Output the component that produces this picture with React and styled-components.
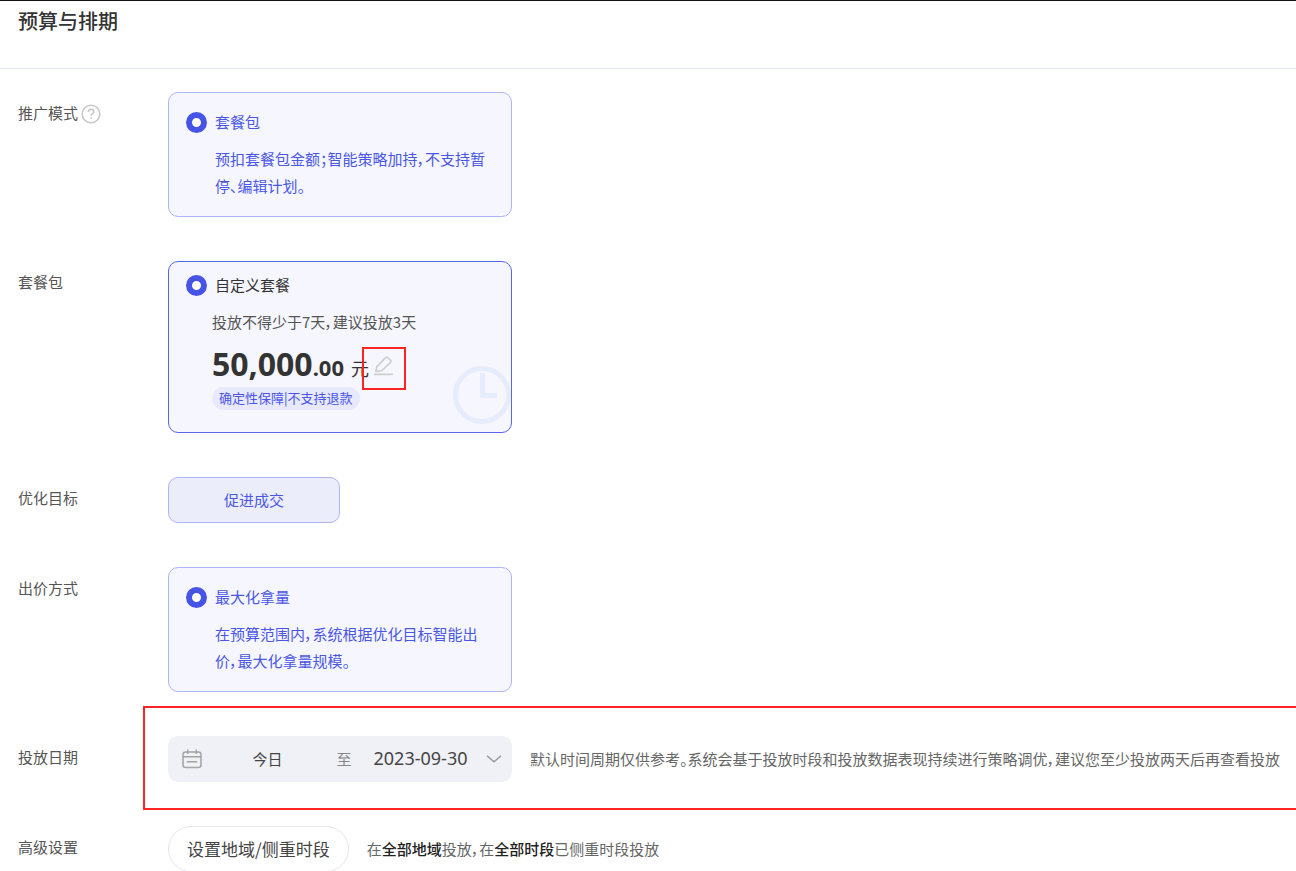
import React from 'react'
import styled, { createGlobalStyle } from 'styled-components'

const App = () => {
  return (
    <>
      <GlobalStyle />
      <Page>
        <Header>
          <h1>预算与排期</h1>
        </Header>
        <Form onSubmit={(e) => e.preventDefault()}>
          <Row>
            <Label>
              推广模式
              <HelpIcon />
            </Label>
            <OptionCard
              name='mode'
              title='套餐包'
              text='预扣套餐包金额；智能策略加持，不支持暂停、编辑计划。'
            />
          </Row>

          <Row>
            <Label>套餐包</Label>
            <Card $active>
              <CardHead $dark>
                <Radio type='radio' name='package' defaultChecked />
                <span>自定义套餐</span>
              </CardHead>
              <PackageBody>
                <p>投放不得少于7天，建议投放3天</p>
                <Price>
                  <strong>50,000</strong>
                  <b>.00</b>
                  <span>元</span>
                  <EditButton type='button' aria-label='编辑金额'>
                    <EditIcon />
                    <Marker $inset='-9px -12px -14px' />
                  </EditButton>
                </Price>
                <Tag>确定性保障|不支持退款</Tag>
              </PackageBody>
              <ClockIcon />
            </Card>
          </Row>

          <Row>
            <Label>优化目标</Label>
            <GoalButton type='button'>促进成交</GoalButton>
          </Row>

          <Row>
            <Label>出价方式</Label>
            <OptionCard
              name='bid'
              title='最大化拿量'
              text='在预算范围内，系统根据优化目标智能出价，最大化拿量规模。'
            />
          </Row>

          <Row>
            <Label>投放日期</Label>
            <Inline>
              <DateRange>
                <CalendarIcon />
                <input type='text' aria-label='开始日期' defaultValue='今日' />
                <span>至</span>
                <input
                  type='text'
                  aria-label='结束日期'
                  defaultValue='2023-09-30'
                />
                <ChevronIcon />
              </DateRange>
              <Hint>
                默认时间周期仅供参考。系统会基于投放时段和投放数据表现持续进行策略调优，建议您至少投放两天后再查看投放
              </Hint>
              <Marker $inset='-30px -4px -28px -25px' />
            </Inline>
          </Row>

          <Row>
            <Label>高级设置</Label>
            <Inline>
              <PillButton type='button'>设置地域/侧重时段</PillButton>
              <Hint>
                在<b>全部地域</b>投放，在<b>全部时段</b>已侧重时段投放
              </Hint>
            </Inline>
          </Row>
        </Form>
      </Page>
    </>
  )
}

const OptionCard = ({ name, title, text }) => (
  <Card>
    <CardHead>
      <Radio type='radio' name={name} defaultChecked />
      <span>{title}</span>
    </CardHead>
    <CardText>{text}</CardText>
  </Card>
)

const HelpIcon = () => (
  <svg width='20' height='20' viewBox='0 0 20 20' fill='none' stroke='#c8c8c8'>
    <circle cx='10' cy='10' r='8.8' strokeWidth='1.6' />
    <path
      d='M7.3 8c0-1.7 1.2-2.7 2.7-2.7s2.7 1 2.7 2.4c0 1.9-2.6 2-2.6 4.1'
      strokeWidth='1.6'
    />
    <path d='M10.1 13.2v1.6' strokeWidth='1.6' />
  </svg>
)

const EditIcon = () => (
  <svg width='20' height='20' viewBox='0 0 20 20' fill='none' stroke='#cfcfcf'>
    <path
      d='M1.8 15.2l1-4.6L11.6 1.6q1-.9 2 0l3 2.8q.9.9 0 1.9l-8.6 8.2-4.4.9z'
      strokeWidth='1.7'
      strokeLinejoin='round'
    />
    <path d='M0 18.4h19' strokeWidth='1.8' />
  </svg>
)

const ClockIcon = () => (
  <Clock viewBox='0 0 58 58' fill='none' stroke='#e7ecfd' strokeWidth='5'>
    <circle cx='29' cy='29' r='26.5' />
    <path d='M29.5 7v22.5h14.5' />
  </Clock>
)

const CalendarIcon = () => (
  <svg width='20' height='20' viewBox='0 0 20 20' fill='none' stroke='#a3a3a3'>
    <rect x='1' y='3' width='18' height='15.5' rx='2.5' strokeWidth='1.5' />
    <path d='M5.8 .5v4.6M14.2 .5v4.6M1 7.8h18M4.8 12.8h10.4' strokeWidth='1.4' />
  </svg>
)

const ChevronIcon = () => (
  <svg width='16' height='16' viewBox='0 0 16 16' fill='none' stroke='#999'>
    <path d='M1 4.8l7 6 7-6' strokeWidth='1.5' />
  </svg>
)

const GlobalStyle = createGlobalStyle`
  * {
    box-sizing: border-box;
    margin: 0;
    padding: 0;
  }
  body {
    background: #fff;
    color: #555;
    font-family: 'Noto Sans CJK SC', sans-serif;
    font-size: 15px;
    font-feature-settings: 'palt';
    overflow-x: hidden;
  }
  button,
  input {
    font: inherit;
    font-feature-settings: inherit;
  }
`

const Page = styled.main`
  border-top: 1px solid #111;
  overflow: hidden;
`

const Header = styled.header`
  height: 68px;
  padding: 0 18px;
  border-bottom: 1px solid #e6eaf2;
  h1 {
    color: #333;
    font-size: 20px;
    font-weight: 500;
    line-height: 40px;
  }
`

const Form = styled.form`
  display: grid;
  gap: 44px;
  padding: 23px 0 0 18px;
`

const Row = styled.div`
  display: grid;
  grid-template-columns: 150px minmax(0, 1fr);
  align-items: start;
`

const Label = styled.div`
  display: flex;
  align-items: center;
  gap: 3px;
  height: 40px;
  svg {
    margin-top: 4px;
  }
`

const Card = styled.div`
  position: relative;
  width: 344px;
  padding: ${({ $active }) => ($active ? '10px 17px 22px' : '16px 17px 17px')};
  border: 1px solid ${({ $active }) => ($active ? '#5a66ea' : '#aeb4f8')};
  border-radius: 10px;
  background: #f6f6ff;
  overflow: hidden;
`

const CardHead = styled.label`
  display: flex;
  align-items: center;
  gap: 8px;
  height: 27px;
  color: ${({ $dark }) => ($dark ? '#333' : '#4a56e6')};
  span {
    padding-bottom: 2px;
  }
`

const Radio = styled.input`
  appearance: none;
  width: 21px;
  height: 21px;
  border: 6px solid #4654e6;
  border-radius: 50%;
  background: #fff;
`

const CardText = styled.p`
  margin-top: 9px;
  padding-left: 29px;
  color: #4a56e6;
  line-height: 27px;
`

const PackageBody = styled.div`
  margin-top: 9px;
  padding-left: 26px;
  line-height: 27px;
`

const Price = styled.div`
  display: flex;
  align-items: baseline;
  height: 52px;
  color: #333;
  font-family: 'Noto Sans', 'Noto Sans CJK SC', sans-serif;
  line-height: 58px;
  strong {
    font-size: 32px;
  }
  b {
    font-size: 22px;
  }
  > span {
    margin-left: 7px;
    font-size: 18px;
  }
`

const EditButton = styled.button`
  position: relative;
  display: block;
  width: 20px;
  height: 20px;
  margin-left: 5px;
  border: 0;
  background: none;
  svg {
    display: block;
  }
`

const Tag = styled.span`
  display: block;
  width: fit-content;
  padding: 0 7px 1px;
  border-radius: 12px;
  background: #e8e9fd;
  color: #4a56e6;
  font-size: 13px;
  line-height: 22px;
`

const Clock = styled.svg`
  position: absolute;
  right: 0;
  bottom: 8px;
  width: 58px;
  height: 58px;
`

/* red frame drawn over the spot it calls out */
const Marker = styled.span`
  position: absolute;
  inset: ${({ $inset }) => $inset};
  border: 2px solid #fb2424;
  pointer-events: none;
`

const GoalButton = styled.button`
  width: 172px;
  height: 46px;
  padding-bottom: 2px;
  border: 1px solid #aeb4f8;
  border-radius: 10px;
  background: #ecedfb;
  color: #4a56e6;
`

const Inline = styled.div`
  position: relative;
  display: flex;
  align-items: center;
  gap: 18px;
`

const DateRange = styled.div`
  display: flex;
  flex: none;
  align-items: center;
  width: 344px;
  height: 46px;
  padding: 0 10px 0 14px;
  border-radius: 10px;
  background: #f0f1f6;
  input {
    flex: 1;
    min-width: 0;
    padding-bottom: 2px;
    border: 0;
    background: none;
    color: #444;
    font-family: 'Noto Sans', 'Noto Sans CJK SC', sans-serif;
    text-align: center;
  }
  input:last-of-type {
    font-size: 18px;
  }
  span {
    width: 22px;
    padding-bottom: 2px;
    color: #888;
    text-align: center;
  }
`

const Hint = styled.p`
  padding-bottom: 2px;
  color: #666;
  white-space: nowrap;
  b {
    color: #222;
    font-weight: 500;
  }
`

const PillButton = styled.button`
  height: 46px;
  padding: 0 18px 2px;
  border: 1px solid #e4e6f0;
  border-radius: 23px;
  background: #fff;
  color: #444;
  font-size: 17px;
`

export default App
